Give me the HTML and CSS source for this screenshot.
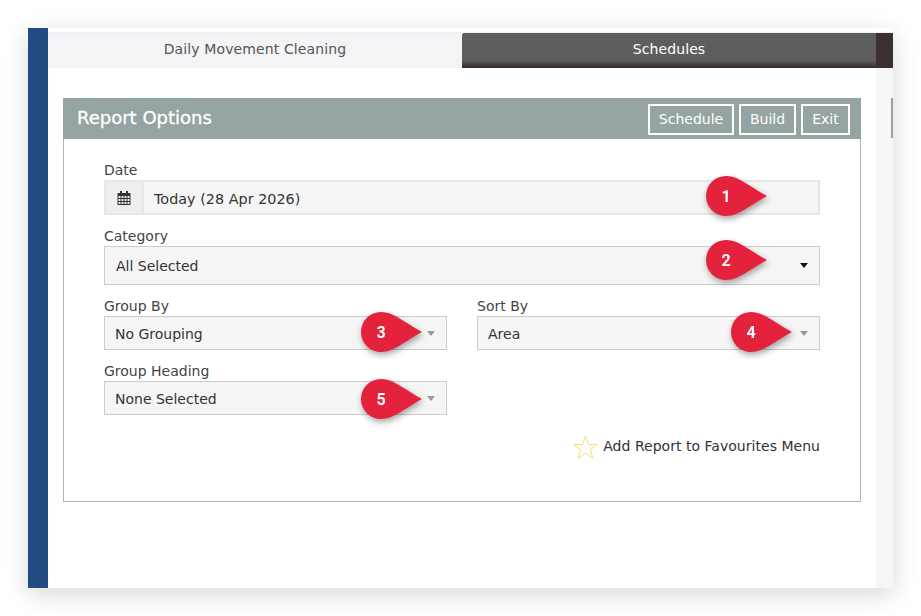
FILE: index.html
```html
<!DOCTYPE html>
<html lang="en">
<head>
<meta charset="utf-8">
<title>Report Options</title>
<link rel="stylesheet" href="styles.css">
</head>
<body>
<svg class="defs" width="0" height="0" aria-hidden="true">
  <symbol id="pin" viewBox="0 0 61 40">
    <path d="M20 0C33 0 44 11 61 20C44 29 33 40 20 40A20 20 0 0 1 20 0Z" fill="#e4223b"/>
  </symbol>
</svg>
<div class="window">
  <aside class="rail"></aside>
  <div class="content">
    <nav class="tabs">
      <div class="tab tab-active">Daily Movement Cleaning</div>
      <div class="tab tab-dark">Schedules</div>
      <div class="tab-end"></div>
    </nav>
    <div class="main">
      <div class="page">
        <section class="panel">
          <header class="panel-head">
            <h1 class="panel-title">Report Options</h1>
            <div class="actions">
              <button class="btn btn-schedule">Schedule</button>
              <button class="btn btn-build">Build</button>
              <button class="btn btn-exit">Exit</button>
            </div>
          </header>
          <div class="panel-body">
            <div class="field field-date">
              <label class="label">Date</label>
              <div class="date-input">
                <span class="addon">
                  <svg class="cal" viewBox="0 0 14 14" width="14" height="14">
                    <path fill="#333" fill-rule="evenodd" d="M3 0h2v2h4V0h2v2h2.500v12H.5V2H3zM1.500 5v2h2V5zm3 0v2h2V5zm3 0v2h2V5zm3 0v2h2V5zM1.500 8v2h2V8zm3 0v2h2V8zm3 0v2h2V8zm3 0v2h2V8zM1.500 11v2h2v-2zm3 0v2h2v-2zm3 0v2h2v-2zm3 0v2h2v-2z"/>
                  </svg>
                </span>
                <span class="date-value">Today (28 Apr 2026)</span>
              </div>
              <span class="marker marker-date"><svg width="61" height="40"><use href="#pin"/></svg><b class="num">1</b></span>
            </div>
            <div class="field field-cat">
              <label class="label">Category</label>
              <div class="select select-tall"><span>All Selected</span><i class="caret caret-black"></i></div>
              <span class="marker marker-cat"><svg width="61" height="40"><use href="#pin"/></svg><b class="num">2</b></span>
            </div>
            <div class="two-col">
              <div class="field">
                <label class="label">Group By</label>
                <div class="select"><span>No Grouping</span><i class="caret"></i></div>
                <span class="marker marker-group"><svg width="61" height="40"><use href="#pin"/></svg><b class="num">3</b></span>
              </div>
              <div class="field">
                <label class="label">Sort By</label>
                <div class="select"><span>Area</span><i class="caret"></i></div>
                <span class="marker marker-sort"><svg width="61" height="40"><use href="#pin"/></svg><b class="num">4</b></span>
              </div>
            </div>
            <div class="two-col two-col-last">
              <div class="field">
                <label class="label">Group Heading</label>
                <div class="select"><span>None Selected</span><i class="caret"></i></div>
                <span class="marker marker-heading"><svg width="61" height="40"><use href="#pin"/></svg><b class="num">5</b></span>
              </div>
            </div>
            <div class="favourite">
              <svg class="star" viewBox="0 0 26 26" width="25" height="25"><path d="M13 1.200l3 8.600h9.200l-7.300 5.500 2.700 8.800L13 18.900 5.400 24.100l2.700-8.800L.8 9.800H10z" fill="none" stroke="#f8dc62" stroke-width="1"/></svg>
              <span>Add Report to Favourites Menu</span>
            </div>
          </div>
        </section>
      </div>
      <div class="scroll"><span class="thumb"></span></div>
    </div>
  </div>
</div>
</body>
</html>
```
FILE: styles.css
```css
* { box-sizing: border-box; }
html, body { margin: 0; padding: 0; }
body {
  width: 921px;
  height: 616px;
  padding: 28px 0 0 28px;
  background: #fff;
  overflow: hidden;
  font-family: "DejaVu Sans", Verdana, sans-serif;
  font-size: 14px;
  color: #333;
}
.defs { position: absolute; }
.window {
  display: flex;
  width: 865px;
  height: 560px;
  background: #fff;
  box-shadow: 0 6px 24px rgba(0, 0, 0, .16);
}
.rail { width: 20px; background: #224b82; flex: none; }
.content { flex: 1; display: flex; flex-direction: column; padding-top: 4px; min-width: 0; }
.tabs { display: flex; height: 36px; flex: none; border-top: 1px solid #eeeef6; }
.tab { width: 414px; display: flex; align-items: center; justify-content: center; font-size: 14px; padding-bottom: 3px; }
.tab-active { background: #f4f4f6; color: #555; letter-spacing: .12px; }
.tab-dark { background: linear-gradient(#5e5e5e 0, #5e5e5e 78%, #3a3030 97%); color: #fff; letter-spacing: .1px; border-top-left-radius: 2px; }
.tab-end { flex: 1; background: #3a3030; }
.main { flex: 1; display: flex; min-height: 0; }
.page { flex: 1; padding: 30px 15px 0; }
.scroll { width: 17px; background: #f6f6f6; padding-top: 30px; display: flex; justify-content: flex-end; }
.thumb { display: block; width: 2px; height: 40px; background: #95a3a2; }
.panel { height: 404px; border: 1px solid #abb8b5; }
.panel-head {
  height: 41px;
  margin: -1px -1px 0;
  background: #95a3a2;
  display: flex;
  align-items: center;
  justify-content: space-between;
  padding: 0 11px 0 14px;
}
.panel-title { margin: 0 0 2px; font-size: 18px; font-weight: 400; color: #fff; -webkit-text-stroke: .3px #fff; }
.actions { display: flex; gap: 5px; margin-top: 1px; }
.btn {
  height: 31px;
  padding: 0;
  border: 2px solid #fff;
  background: transparent;
  color: #fff;
  font: 14px "DejaVu Sans", Verdana, sans-serif;
}
.btn-schedule { width: 86px; }
.btn-build { width: 57px; }
.btn-exit { width: 49px; }
.panel-body { padding: 21px 40px 0; }
.field { position: relative; }
.label { display: block; line-height: 20px; height: 20px; color: #444; }
.field-date { margin-bottom: 11px; }
.date-input { display: flex; height: 35px; border: 2px solid #e6e6e6; background: #f5f5f5; }
.addon { width: 38px; background: #eee; border-right: 2px solid #e6e6e6; display: flex; align-items: center; justify-content: center; flex: none; }
.date-value { padding: 2px 0 0 10px; line-height: 31px; font-size: 14.3px; letter-spacing: .05px; }
.select {
  height: 34px;
  border: 1px solid #ccc;
  background: #f5f5f5;
  display: flex;
  align-items: center;
  justify-content: space-between;
  padding: 0 11px 0 10px;
}
.select > span { margin-top: 2px; }
.select-tall { height: 39px; padding: 0 11px 0 11px; }
.select-tall > span { margin-top: 0; }
.caret { width: 0; height: 0; border: 4px solid transparent; border-top: 5px solid #999; border-bottom: 0; margin-top: 0; }
.caret-black { border-top-color: #111; border-width: 5px 4px 0; }
.field-cat { margin-bottom: 11px; }
.two-col { display: grid; grid-template-columns: 343px 343px; column-gap: 30px; }
.two-col-last { margin-top: 11px; }
.marker { position: absolute; display: block; width: 61px; height: 40px; filter: drop-shadow(1px 3px 3px rgba(0, 0, 0, .35)); }
.marker svg { display: block; }
.marker-date { right: 53px; top: 16px; }
.marker-cat { right: 53px; top: 14px; }
.marker-group { right: 25px; top: 16px; }
.marker-sort { right: 28px; top: 16px; }
.marker-heading { right: 25px; top: 18px; }
.num {
  position: absolute;
  left: 0;
  top: 1px;
  width: 40px;
  text-align: center;
  font: 700 16px/40px Roboto, sans-serif;
  color: #fff;
}
.favourite {
  display: flex;
  justify-content: flex-end;
  align-items: center;
  gap: 5px;
  margin-top: 19px;
  height: 26px;
}
.favourite span { margin: 0 0 2px 0; letter-spacing: .03px; }
```
